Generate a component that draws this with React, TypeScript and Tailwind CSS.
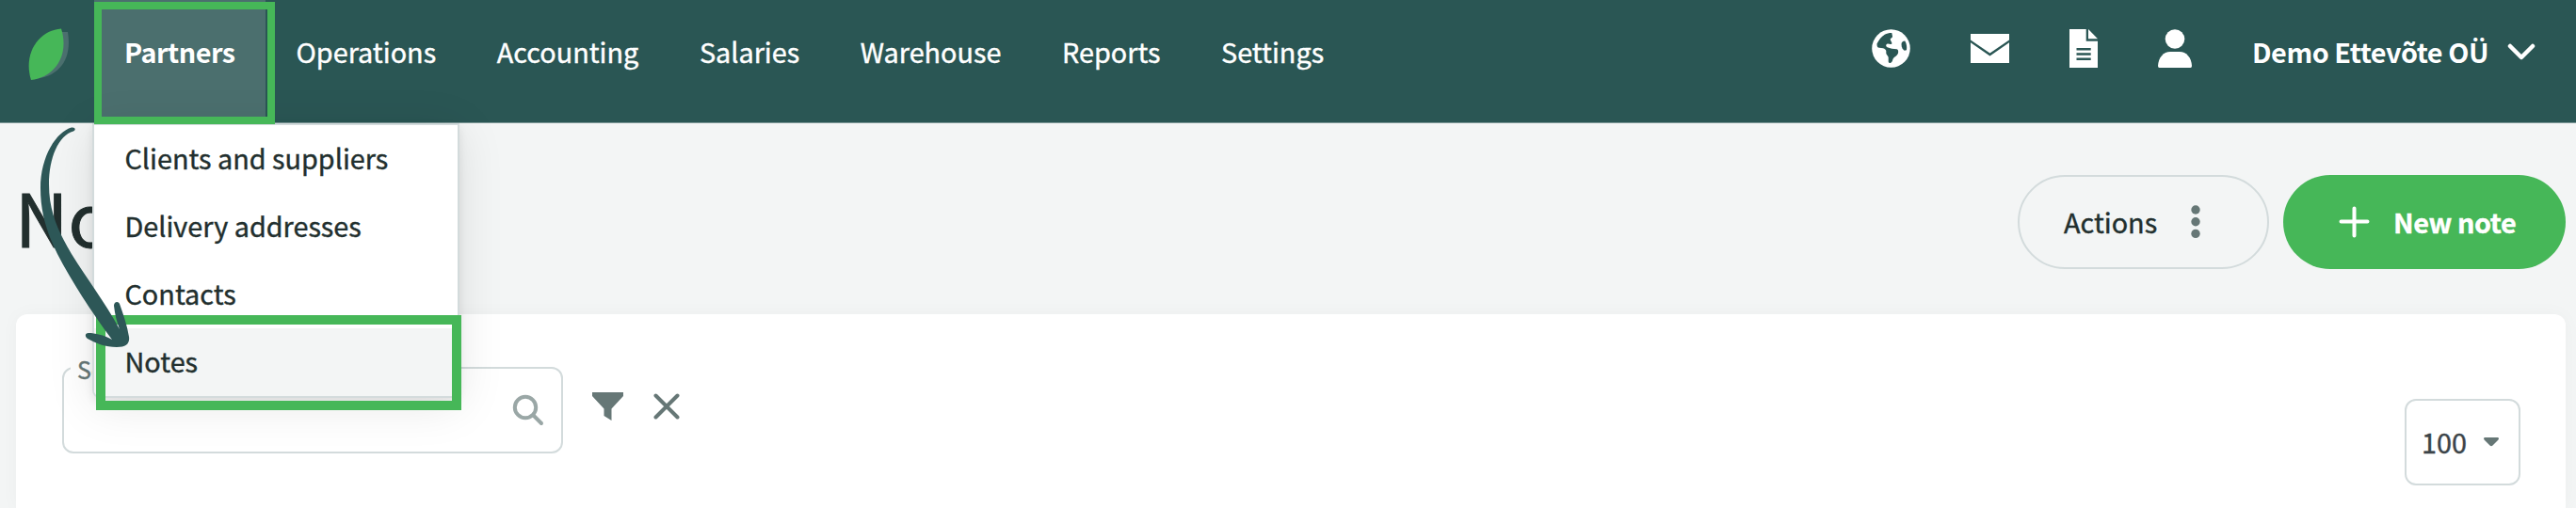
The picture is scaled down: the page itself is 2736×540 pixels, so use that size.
import React from 'react';

const MENU_ITEMS = ['Operations', 'Accounting', 'Salaries', 'Warehouse', 'Reports', 'Settings'];
const PARTNER_LINKS = ['Clients and suppliers', 'Delivery addresses', 'Contacts', 'Notes'];

function LeafLogo() {
  return (
    <svg width="44" height="56" viewBox="0 0 44 56" className="mt-[30px] ml-[30px] shrink-0">
      <path d="M6 54C32 52 47 34 42 4L36 4Z" fill="#4b6f6e" />
      <path d="M3 55C-6 26 12 2 35 0.500C44 29 28 52 3 55Z" fill="#46b758" />
    </svg>
  );
}

function GlobeIcon() {
  return (
    <svg width="41" height="41" viewBox="0 0 41 41">
      <circle cx="20.500" cy="20.500" r="20.300" fill="#fff" />
      <path
        d="M21.300 4C18 4 16 4.500 13.700 5.700C10 8 7.500 11.500 5.500 15.500C5.500 18.500 6 19.500 8 19.700L12 20.300C14 21 15 22 15.300 23V25.500C15.500 27.500 17.300 28 17.700 30V34.500C18 36 19.500 36.500 20.500 35.500C22 34.500 22 33 22.700 31.500C23.500 29.500 27 28.500 28 25.500C28.500 23 28 21.700 26.700 21.200L21.300 20.700L16.500 19.300C15 18.500 14.500 16.500 16.300 15.700C18 15 20 17 21.300 15.500C22 14 19.700 12.500 19.700 10.700C20 9.500 22.500 9 22 7.500Z"
        fill="#2a5654"
      />
      <path d="M35.300 12.500C33 12.500 31.500 14 31.500 16C31.500 19 33 22 34.700 22.700L37 22.300C37.500 19 37 15.500 35.300 12.500Z" fill="#2a5654" />
    </svg>
  );
}

function MailIcon() {
  return (
    <svg width="41" height="31" viewBox="0 0 41 31" fill="#fff">
      <path d="M0 0H41V6.500L20.500 20.500L0 6.500Z" />
      <path d="M0 9.200L20.500 23.500L41 9.200V31H0Z" />
    </svg>
  );
}

function DocumentIcon() {
  return (
    <svg width="30" height="41" viewBox="0 0 30 41">
      <path d="M0 0H17.700V12.700H30V41H0Z" fill="#fff" />
      <path d="M20 0L30 10.300H20Z" fill="#fff" />
      <path d="M7.500 21.300H22.700M7.500 26.500H22.700M7.500 31.700H22.700" stroke="#2a5654" strokeWidth="2.600" />
    </svg>
  );
}

function PersonIcon() {
  return (
    <svg width="36" height="41" viewBox="0 0 36 41" fill="#fff">
      <circle cx="18" cy="10.500" r="10.300" />
      <path d="M1.500 41Q0 41 0 39C0.500 30 6 24 13 24H23C30 24 35.500 30 36 39Q36 41 34.500 41Z" />
    </svg>
  );
}

function HandArrow() {
  return (
    <svg width="150" height="240" viewBox="0 130 150 240" className="absolute top-[130px] left-0 z-30" fill="#2d5757">
      <path d="M76 135.500C60 140 43 166 43 200C43 226 50 248 61 270C76 299 96 330 119 361C110 356 101 354 94 354C90 354 90 358 93 360C102 365 112 369 124 369C134 369 138 365 137 358C135 346 131 334 127 323C126 320 121 320 121 325C122 334 124 342 127 350C112 322 92 296 76 270C63 248 52 226 52 196C52 168 62 144 78 139.500C81 138 80 135 76 135.500Z" />
    </svg>
  );
}

export default function App() {
  return (
    <div className="relative h-[540px] w-[2736px] overflow-hidden bg-[#f3f5f5] font-['Noto_Sans_CJK_SC',sans-serif] text-[28.8px] text-[#222f2e] [-webkit-text-stroke:0.4px]">
      <header className="flex h-[131px] border-b border-[#7c9897] bg-[#2a5654] text-white">
        <LeafLogo />
        <div className="relative ml-[26px] w-[192px]">
          <div className="h-[130px] w-[182px] bg-[#4b6f6e] pt-[33px] pl-[32px] leading-[44px] font-bold tracking-[-0.5px] [-webkit-text-stroke:0px]">
            Partners
          </div>
          <div className="absolute top-[2px] left-0 z-20 h-[130px] w-[192px] border-8 border-[#46b758]" />
          <nav className="absolute top-[131px] -left-[2px] z-10 h-[292px] w-[390px] overflow-hidden rounded-b-lg border-2 border-[#d3dbdc] bg-white text-[#222f2e] shadow-[0_8px_50px_rgba(0,0,0,0.1),0_4px_10px_rgba(0,0,0,0.08)]">
            {PARTNER_LINKS.map((label) => (
              <a key={label} className="block h-[72px] pt-[13px] pl-[32.5px] leading-[44px] last:bg-[#f3f5f5]">
                {label}
              </a>
            ))}
          </nav>
          <div className="absolute top-[335px] left-[2px] z-20 h-[101px] w-[388px] border-[10px] border-[#46b758]" />
        </div>
        <nav className="flex gap-[64.6px] pt-[33px] pl-[22.5px] leading-[44px]">
          {MENU_ITEMS.map((label) => (
            <a key={label}>{label}</a>
          ))}
        </nav>
        <div className="ml-auto flex pt-[31px] pr-[43px]">
          <div className="mr-[64px] flex h-[41px] items-center gap-[64px]">
            <GlobeIcon />
            <MailIcon />
            <DocumentIcon />
            <PersonIcon />
          </div>
          <span className="mt-[2px] w-[251px] leading-[44px] font-bold tracking-[-0.45px] whitespace-nowrap [-webkit-text-stroke:0px]">Demo Ettevõte OÜ</span>
          <svg width="30" height="20" viewBox="0 0 30 20" className="mt-[15px] ml-[20px]" fill="none" stroke="#fff" strokeWidth="4.500" strokeLinecap="round" strokeLinejoin="round">
            <path d="M3 3L15 15L27 3" />
          </svg>
        </div>
      </header>

      <section className="flex h-[203px] items-start pr-[11px] pl-[16px]">
        <h1 className="pt-[43px] text-[78px] leading-[110px] [-webkit-text-stroke:1px]">Notes</h1>
        <button className="mt-[55px] ml-auto flex h-[100px] w-[267px] items-center rounded-full border-2 border-[#d3dbdc] pl-[47px]">
          <span>Actions</span>
          <svg width="10" height="36" viewBox="0 0 10 36" className="ml-[36px]" fill="#667776">
            <circle cx="5" cy="5" r="4.700" />
            <circle cx="5" cy="17.700" r="4.700" />
            <circle cx="5" cy="30.400" r="4.700" />
          </svg>
        </button>
        <button className="mt-[55px] ml-[15px] flex h-[100px] w-[300px] items-center rounded-full bg-[#46b758] pl-[59px] text-white">
          <svg width="33" height="34" viewBox="0 0 33 34" stroke="#fff" strokeWidth="4" strokeLinecap="round">
            <path d="M16.500 2.500V31.500M2.500 16.500H30.500" />
          </svg>
          <span className="ml-[25px] font-bold tracking-[-0.4px]">New note</span>
        </button>
      </section>

      <main className="mr-[11px] ml-[17px] flex h-[206px] items-start rounded-t-xl bg-white shadow-[0_0_20px_rgba(0,0,0,0.03)]">
        <div className="relative mt-[56px] ml-[49px] flex h-[92px] w-[532px] items-center justify-end rounded-xl border-2 border-[#d3dbdc] pr-[18px]">
          <label className="absolute -top-[17px] left-[7px] bg-white pr-2 pl-[7px] text-[25px] leading-[34px] text-[#667776]">Search</label>
          <svg width="34" height="34" viewBox="0 0 34 34" fill="none" stroke="#9aa7a6" strokeWidth="4" strokeLinecap="round">
            <circle cx="14" cy="14" r="11.200" />
            <path d="M22.500 22.500L31 31" />
          </svg>
        </div>
        <svg width="33" height="31" viewBox="0 0 33 31" className="mt-[83px] ml-[31px]" fill="#667776">
          <path d="M0 0H33V4L20.500 17.500V30L12.500 25V17.500L0 4Z" />
        </svg>
        <svg width="28" height="28" viewBox="0 0 28 28" className="mt-[84px] ml-[32px]" stroke="#667776" strokeWidth="4" strokeLinecap="round">
          <path d="M2.500 2.500L25.500 25.500M25.500 2.500L2.500 25.500" />
        </svg>
        <button className="mt-[90px] mr-[48px] ml-auto flex h-[92px] w-[123px] items-center rounded-xl border-2 border-[#d3dbdc] pl-[16px] text-[#3c4449]">
          <span>100</span>
          <svg width="16" height="10" viewBox="0 0 16 10" className="ml-[18px]" fill="#667776">
            <path d="M1 0H15Q17 1 15 3L9.500 8.500Q8 10 6.500 8.500L1 3Q-1 1 1 0Z" />
          </svg>
        </button>
      </main>
      <HandArrow />
    </div>
  );
}
